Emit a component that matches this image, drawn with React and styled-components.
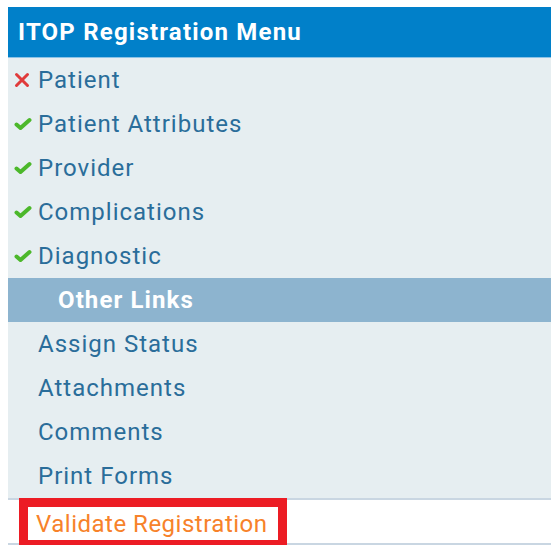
import React from "react";
import styled, { createGlobalStyle } from "styled-components";

const GlobalStyle = createGlobalStyle`
  body {
    margin: 0;
    padding: 7px 0 0 8px;
    background: #ffffff;
    font-family: Roboto, "Liberation Sans", Arial, sans-serif;
  }
`;

const Menu = styled.nav`
  width: 560px;
  background-color: #e6eef1;
`;

const Header = styled.div`
  height: 50px;
  display: flex;
  align-items: center;
  padding-left: 10px;
  background-color: #0180c9;
  border-bottom: 1px solid #8cc3e6;
  color: #ffffff;
  font-size: 24px;
  font-weight: 700;
  letter-spacing: 1.2px;
`;

const Item = styled.a`
  display: flex;
  align-items: center;
  height: 44px;
  padding-left: ${(p) => (p.$icon ? "6px" : "30px")};
  color: #2a6d9a;
  font-size: 24px;
  letter-spacing: 1px;
  text-decoration: none;
`;

const Mark = styled.span`
  width: 24px;
  display: flex;
  align-items: center;
`;

const SectionTitle = styled.div`
  height: 44px;
  display: flex;
  align-items: center;
  padding-left: 50px;
  background-color: #8db4cf;
  color: #ffffff;
  font-size: 24px;
  font-weight: 700;
  letter-spacing: 1.1px;
`;

const FooterRow = styled.div`
  height: 43px;
  background-color: #ffffff;
  border-top: 2px solid #c9d6e2;
  border-bottom: 2px solid #c9d6e2;
  display: flex;
  align-items: center;
  padding-left: 11px;
`;

const Highlight = styled.span`
  display: flex;
  align-items: center;
  height: 33px;
  padding: 0 10px 0 8px;
  border: 9px solid #ec1c24;
  margin-top: 4px;
  color: #f7822a;
  font-size: 24px;
  letter-spacing: 0.5px;
`;

const Cross = () => (
  <svg width="16" height="16" viewBox="0 0 16 16">
    <path d="M2.5 2.5 L13.5 13.5 M13.5 2.5 L2.5 13.5" stroke="#e03b3b" strokeWidth="3" strokeLinecap="round" />
  </svg>
);

const Check = () => (
  <svg width="18" height="16" viewBox="0 0 18 16">
    <path d="M2.5 8.5 L6.5 12 L15.5 4" fill="none" stroke="#4cb82b" strokeWidth="4" strokeLinecap="round" strokeLinejoin="round" />
  </svg>
);

const steps = [
  { label: "Patient", done: false },
  { label: "Patient Attributes", done: true },
  { label: "Provider", done: true },
  { label: "Complications", done: true },
  { label: "Diagnostic", done: true },
];

const links = ["Assign Status", "Attachments", "Comments", "Print Forms"];

export default function App() {
  return (
    <>
      <GlobalStyle />
      <Menu>
        <Header>ITOP Registration Menu</Header>
        {steps.map((s) => (
          <Item key={s.label} href="#" $icon>
            <Mark>{s.done ? <Check /> : <Cross />}</Mark>
            {s.label}
          </Item>
        ))}
        <SectionTitle>Other Links</SectionTitle>
        {links.map((l) => (
          <Item key={l} href="#">
            {l}
          </Item>
        ))}
        <FooterRow>
          <Highlight>Validate Registration</Highlight>
        </FooterRow>
      </Menu>
    </>
  );
}
